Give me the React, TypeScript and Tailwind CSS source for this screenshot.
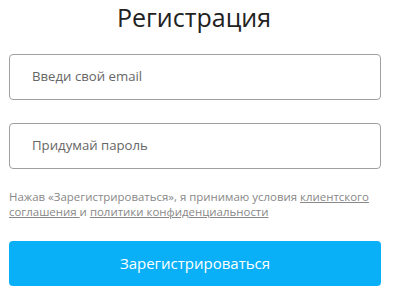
import React from "react";

export default function App() {
  return (
    <div
      className="w-[400px] h-[299px] bg-white overflow-hidden"
      style={{ fontFamily: '"Open Sans", sans-serif' }}
    >
      <div className="ml-[9px] w-[372px] flex flex-col">
        <h1 className="text-center text-[25px] leading-[36px] text-[#222] font-normal mt-[-1px] pr-[2px]">
          Регистрация
        </h1>
        <div className="mt-[19px] h-[46px] rounded-[4px] border border-[#a0a0a0] flex items-center pl-[22px] text-[13.2px] text-[#666]">
          Введи свой email
        </div>
        <div className="mt-[23px] h-[46px] rounded-[4px] border border-[#a0a0a0] flex items-center pl-[22px] text-[13.2px] text-[#666]">
          Придумай пароль
        </div>
        <p className="mt-[21px] text-[11.45px] leading-[14.5px] text-[#888]">
          Нажав «Зарегистрироваться», я принимаю условия{" "}
          <span className="underline">клиентского соглашения </span>и{" "}
          <span className="underline">политики конфиденциальности</span>
        </p>
        <button className="mt-[22px] h-[45px] rounded-[4px] bg-[#0ab0f7] text-white text-[15px] flex items-center justify-center">
          Зарегистрироваться
        </button>
      </div>
    </div>
  );
}
